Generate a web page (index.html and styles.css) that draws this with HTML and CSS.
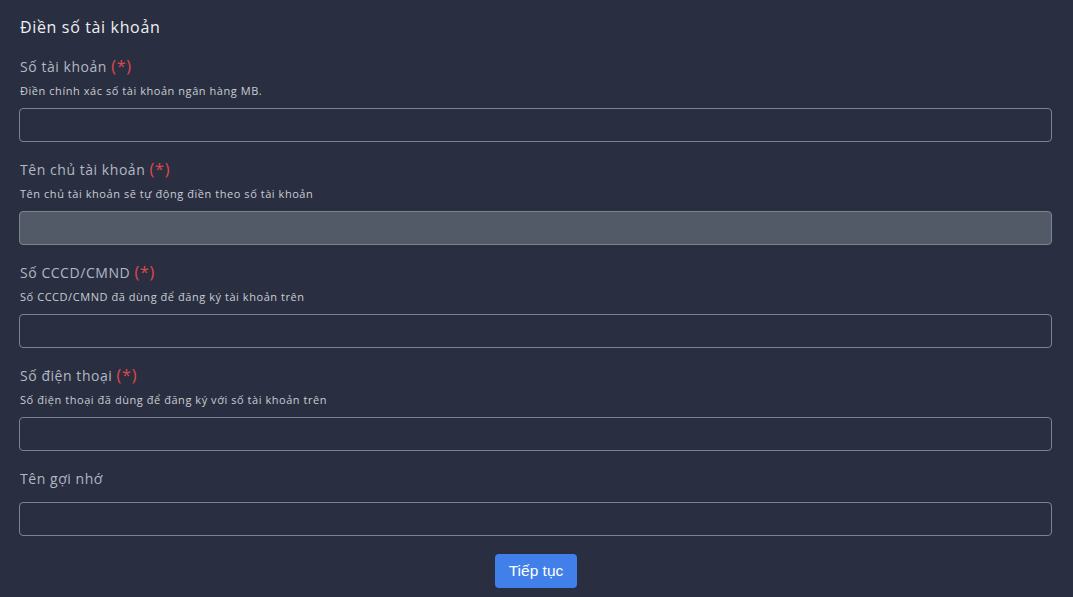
FILE: index.html
```html
<!DOCTYPE html>
<html lang="vi">
<head>
<meta charset="utf-8">
<link rel="stylesheet" href="styles.css">
</head>
<body>
<form class="form">
  <h2 class="title">Điền số tài khoản</h2>

  <div class="field">
    <label class="label">Số tài khoản <span class="req">(*)</span></label>
    <div class="hint">Điền chính xác số tài khoản ngân hàng MB.</div>
    <input class="input" type="text">
  </div>

  <div class="field">
    <label class="label">Tên chủ tài khoản <span class="req">(*)</span></label>
    <div class="hint">Tên chủ tài khoản sẽ tự động điền theo số tài khoản</div>
    <input class="input input-disabled" type="text" disabled>
  </div>

  <div class="field">
    <label class="label">Số CCCD/CMND <span class="req">(*)</span></label>
    <div class="hint">Số CCCD/CMND đã dùng để đăng ký tài khoản trên</div>
    <input class="input" type="text">
  </div>

  <div class="field">
    <label class="label">Số điện thoại <span class="req">(*)</span></label>
    <div class="hint">Số điện thoại đã dùng để đăng ký với số tài khoản trên</div>
    <input class="input" type="text">
  </div>

  <div class="field field-nohint">
    <label class="label">Tên gợi nhớ</label>
    <input class="input" type="text">
  </div>

  <div class="actions">
    <button class="btn" type="button">Tiếp tục</button>
  </div>
</form>
</body>
</html>
```

FILE: styles.css
```css
html, body {
  margin: 0;
  padding: 0;
  background: #292f40;
  height: 100%;
}
body {
  font-family: "Open Sans", "Noto Sans", sans-serif;
  overflow: hidden;
}
.form {
  padding: 16px 21px 0 19px;
  display: flex;
  flex-direction: column;
}
.title {
  margin: 0 0 19px 1px;
  font-size: 16px;
  line-height: 22px;
  font-weight: 500;
  letter-spacing: 0.65px;
  color: #eceef2;
}
.field {
  display: flex;
  flex-direction: column;
  margin-bottom: 18px;
}
.label {
  display: block;
  height: 20px;
  font-size: 14px;
  line-height: 20px;
  font-weight: 500;
  letter-spacing: 0.55px;
  color: #b3b8c3;
  margin-left: 1px;
}
.req {
  color: #e0484d;
  font-size: 16px;
  line-height: 0;
  letter-spacing: 0.8px;
}
.hint {
  margin: 6px 0 9px 1px;
  font-size: 11px;
  line-height: 16px;
  letter-spacing: 0.55px;
  color: #c9ccd3;
}
.field-nohint .label {
  margin-bottom: 13px;
}
.input {
  box-sizing: border-box;
  width: 100%;
  height: 34px;
  margin: 0;
  border: 1px solid #7d828e;
  border-radius: 4px;
  background: transparent;
  font: inherit;
  color: #fff;
  padding: 0 10px;
}
.input-disabled {
  background: #535a67;
}
.actions {
  display: flex;
  justify-content: center;
  margin-top: 0;
  padding-left: 1px;
}
.btn {
  width: 82px;
  height: 34px;
  border: 0;
  border-radius: 4px;
  background: #4080e8;
  color: #ffffff;
  font-family: "Liberation Sans", Arial, sans-serif;
  font-size: 15.5px;
}
```
